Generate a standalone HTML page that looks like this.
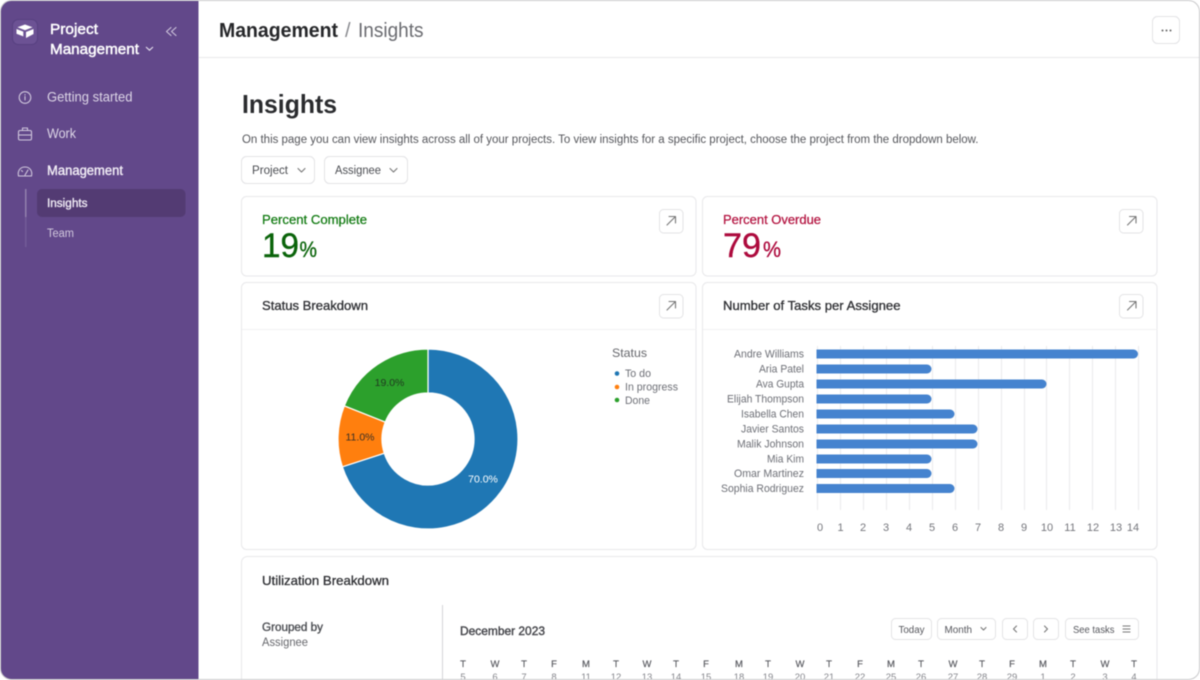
<!DOCTYPE html>
<html lang="en"><head><meta charset="utf-8"><title>Insights</title>
<style>
html,body{margin:0;padding:0;background:#fff;width:1200px;height:680px;overflow:hidden}
svg{display:block;filter:blur(.4px)}
text{font-family:"Liberation Sans",sans-serif;white-space:pre}
.s{fill:#fff;stroke:#e8e8ea;stroke-width:1}
.b{fill:#fff;stroke:#e3e3e5;stroke-width:1}
.g{fill:none;stroke:#777;stroke-width:1.1;stroke-linecap:round;stroke-linejoin:round}
.n{fill:none;stroke:#cfc6dc;stroke-width:1.1;stroke-linecap:round;stroke-linejoin:round}
.d{font-size:11px;fill:#6d6f76}
.c{font-size:9.5px;fill:#55565c;stroke:#55565c;stroke-width:.15px;text-anchor:middle}
.v{font-size:9.5px;fill:#85868c;text-anchor:middle}
.l{font-size:11.5px;fill:#4b4d52}
.t{font-size:12.5px;fill:#2f3034;stroke:#2f3034;stroke-width:.3px}
.a{font-size:11px;fill:#75767c;text-anchor:middle}
</style></head><body>
<svg width="1200" height="680" viewBox="0 0 1200 680" xmlns="http://www.w3.org/2000/svg">
<defs><clipPath id="w"><rect x="0.5" y="0.5" width="1199" height="679" rx="11"/></clipPath></defs>
<g clip-path="url(#w)">
<rect width="1200" height="680" fill="#fff"/>
<rect width="198.500" height="680" fill="#62488a"/>
<rect x="12.500" y="19.500" width="25" height="25" rx="6" fill="#6c5294" stroke="#574080"/>
<path d="M25 24.500l7.500 2.800-7.500 2.900-7.500-2.900z" fill="#fff"/>
<path d="M16.500 29l6.800 2.600v4.800l-6.800-2.700z" fill="#fff"/>
<path d="M33.500 29v5l-7.500 4v-6z" fill="#fff"/>
<text x="50" y="34" font-size="14.500" fill="#fff" stroke="#fff" stroke-width=".45" textLength="48" lengthAdjust="spacingAndGlyphs">Project</text>
<text x="50" y="54" font-size="14.500" fill="#fff" stroke="#fff" stroke-width=".45" textLength="89" lengthAdjust="spacingAndGlyphs">Management</text>
<path d="M146 47l3.500 3.200 3.500-3.200" fill="none" stroke="#e7e1ef" stroke-width="1.100"/>
<path d="M171 27.500l-4.500 4 4.500 4M176 27.500l-4.500 4 4.500 4" class="n"/>
<circle cx="25" cy="97.500" r="5.800" class="n"/><path d="M25 96.500v3.500M25 94.600v.3" class="n"/>
<rect x="18.500" y="130.500" width="13" height="9.500" rx="1.500" class="n"/><path d="M22.500 130.500v-2.500h5v2.500M18.500 135h13" class="n"/>
<path d="M18.500 176h13c1.200-5.500-2-9-6.500-9s-7.700 3.500-6.500 9zM25 175l3-5M21.500 170.500l1 1" class="n"/>
<text x="47" y="101.500" font-size="13.500" fill="#dcd5e6" textLength="85.500" lengthAdjust="spacingAndGlyphs">Getting started</text>
<text x="47" y="138" font-size="13.500" fill="#dcd5e6" textLength="29" lengthAdjust="spacingAndGlyphs">Work</text>
<text x="47" y="175" font-size="13.500" fill="#f3eff7" stroke="#f3eff7" stroke-width=".35" textLength="76" lengthAdjust="spacingAndGlyphs">Management</text>
<rect x="25" y="189" width="1.500" height="28" fill="#9280ad"/>
<rect x="25" y="217" width="1.500" height="30" fill="#735b98"/>
<rect x="37" y="189" width="148.500" height="28" rx="5" fill="#533b73"/>
<text x="47" y="207" font-size="11.500" fill="#f0ecf5" stroke="#f0ecf5" stroke-width=".35" textLength="40.500" lengthAdjust="spacingAndGlyphs">Insights</text>
<text x="47" y="237" font-size="11.500" fill="#d2c9de" textLength="27" lengthAdjust="spacingAndGlyphs">Team</text>

<rect x="199" y="57" width="1001" height="1" fill="#e8e8ea"/>
<text x="219" y="37" font-size="20" font-weight="700" fill="#26272a" textLength="119" lengthAdjust="spacingAndGlyphs">Management</text>
<text x="345" y="37" font-size="20" fill="#8a8b90">/</text>
<text x="358" y="37" font-size="20" fill="#6a6b70" textLength="65.500" lengthAdjust="spacingAndGlyphs">Insights</text>
<rect x="1152.500" y="16.500" width="27" height="27" rx="5" class="b"/>
<circle cx="1162.500" cy="30.500" r="1" fill="#666"/><circle cx="1166.500" cy="30.500" r="1" fill="#666"/><circle cx="1170.500" cy="30.500" r="1" fill="#666"/>

<text x="242" y="113" font-size="26" font-weight="700" fill="#2a2b2e" textLength="95" lengthAdjust="spacingAndGlyphs">Insights</text>
<text x="242" y="143" font-size="11.500" fill="#55565b" textLength="736.500" lengthAdjust="spacingAndGlyphs">On this page you can view insights across all of your projects. To view insights for a specific project, choose the project from the dropdown below.</text>

<rect x="241.500" y="156.500" width="73" height="27" rx="5" class="b"/>
<text x="252" y="174" class="l" textLength="36" lengthAdjust="spacingAndGlyphs">Project</text>
<path d="M298 168.500l3.500 3.500 3.500-3.500" class="g"/>
<rect x="324.500" y="156.500" width="83" height="27" rx="5" class="b"/>
<text x="335" y="174" class="l" textLength="46" lengthAdjust="spacingAndGlyphs">Assignee</text>
<path d="M390 168.500l3.500 3.500 3.500-3.500" class="g"/>

<rect x="241.500" y="196.500" width="454.500" height="79.500" rx="5" class="s"/>
<rect x="702.500" y="196.500" width="454.500" height="79.500" rx="5" class="s"/>
<text x="262" y="224" font-size="13" fill="#117a11" stroke="#117a11" stroke-width=".25" textLength="105" lengthAdjust="spacingAndGlyphs">Percent Complete</text>
<text x="262" y="257" font-size="34" fill="#0a640a" stroke="#0a640a" stroke-width=".4" textLength="37" lengthAdjust="spacingAndGlyphs">19</text>
<text x="299.500" y="257" font-size="22" fill="#0a640a" stroke="#0a640a" stroke-width=".3" textLength="17.500" lengthAdjust="spacingAndGlyphs">%</text>
<text x="723" y="224" font-size="13" fill="#b3123f" stroke="#b3123f" stroke-width=".25" textLength="98" lengthAdjust="spacingAndGlyphs">Percent Overdue</text>
<text x="723" y="257" font-size="34" fill="#ad0a3d" stroke="#ad0a3d" stroke-width=".4" textLength="38" lengthAdjust="spacingAndGlyphs">79</text>
<text x="763" y="257" font-size="22" fill="#ad0a3d" stroke="#ad0a3d" stroke-width=".3" textLength="18" lengthAdjust="spacingAndGlyphs">%</text>

<rect x="241.500" y="282.500" width="454.500" height="267" rx="5" class="s"/>
<rect x="702.500" y="282.500" width="454.500" height="267" rx="5" class="s"/>
<rect x="242" y="329" width="454" height="1" fill="#f2f2f3"/>
<rect x="703" y="329" width="454" height="1" fill="#f2f2f3"/>
<text x="262" y="310" class="t" textLength="106" lengthAdjust="spacingAndGlyphs">Status Breakdown</text>
<text x="723" y="310" class="t" textLength="177.500" lengthAdjust="spacingAndGlyphs">Number of Tasks per Assignee</text>

<rect x="659.500" y="209.500" width="23.500" height="23.500" rx="4" class="b"/>
<path d="M667 225l8-8M669 216.500h6.500v6.500" class="g"/>
<rect x="1119.500" y="209.500" width="23.500" height="23.500" rx="4" class="b"/>
<path d="M1127.500 225l8-8M1129.500 216.500h6.500v6.500" class="g"/>
<rect x="659.500" y="294.500" width="23.500" height="23.500" rx="4" class="b"/>
<path d="M667 310l8-8M669 301.500h6.500v6.500" class="g"/>
<rect x="1119.500" y="294.500" width="23.500" height="23.500" rx="4" class="b"/>
<path d="M1127.500 310l8-8M1129.500 301.500h6.500v6.500" class="g"/>

<g stroke="#fff" stroke-width="1.200">
<path d="M428 349A90 90 0 1 1 342.400 466.800L384.250 453.200A46 46 0 1 0 428 393Z" fill="#1f77b4"/>
<path d="M342.400 466.800A90 90 0 0 1 344.320 405.870L385.230 422.070A46 46 0 0 0 384.250 453.200Z" fill="#ff7f0e"/>
<path d="M344.320 405.870A90 90 0 0 1 428 349L428 393A46 46 0 0 0 385.230 422.070Z" fill="#2ca02c"/>
</g>
<text x="483" y="482.500" font-size="10.500" fill="#fff" text-anchor="middle">70.0%</text>
<text x="360" y="440.500" font-size="10.500" fill="#3a3026" text-anchor="middle">11.0%</text>
<text x="389.500" y="386" font-size="10.500" fill="#203a20" text-anchor="middle">19.0%</text>
<text x="612" y="357" font-size="12" fill="#66676c" textLength="35" lengthAdjust="spacingAndGlyphs">Status</text>
<circle cx="617" cy="373.500" r="2.300" fill="#1f77b4"/><circle cx="617" cy="387" r="2.300" fill="#ff7f0e"/><circle cx="617" cy="400" r="2.300" fill="#2ca02c"/>
<text x="625" y="377" class="d" textLength="26" lengthAdjust="spacingAndGlyphs">To do</text>
<text x="625" y="390.500" class="d" textLength="53" lengthAdjust="spacingAndGlyphs">In progress</text>
<text x="625" y="404" class="d" textLength="25" lengthAdjust="spacingAndGlyphs">Done</text>

<g fill="#ebebed">
<rect x="817" y="346" width="1" height="164"/><rect x="840" y="346" width="1" height="164"/><rect x="863" y="346" width="1" height="164"/><rect x="886" y="346" width="1" height="164"/><rect x="909" y="346" width="1" height="164"/><rect x="932" y="346" width="1" height="164"/><rect x="955" y="346" width="1" height="164"/><rect x="978" y="346" width="1" height="164"/><rect x="1001" y="346" width="1" height="164"/><rect x="1024" y="346" width="1" height="164"/><rect x="1046" y="346" width="1" height="164"/><rect x="1069" y="346" width="1" height="164"/><rect x="1092" y="346" width="1" height="164"/><rect x="1115" y="346" width="1" height="164"/><rect x="1138" y="346" width="1" height="164"/>
</g>
<g fill="#4583cf">
<path d="M816.500 349.500h317a4.500 4.500 0 0 1 0 9h-317z"/>
<path d="M816.500 364.500h110.500a4.500 4.500 0 0 1 0 9h-110.500z"/>
<path d="M816.500 379.500h225.500a4.500 4.500 0 0 1 0 9h-225.500z"/>
<path d="M816.500 394.500h110.500a4.500 4.500 0 0 1 0 9h-110.500z"/>
<path d="M816.500 409.500h133.500a4.500 4.500 0 0 1 0 9h-133.500z"/>
<path d="M816.500 424.500h156.500a4.500 4.500 0 0 1 0 9h-156.500z"/>
<path d="M816.500 439.500h156.500a4.500 4.500 0 0 1 0 9h-156.500z"/>
<path d="M816.500 454.500h110.500a4.500 4.500 0 0 1 0 9h-110.500z"/>
<path d="M816.500 469h110.500a4.500 4.500 0 0 1 0 9h-110.500z"/>
<path d="M816.500 484h133.500a4.500 4.500 0 0 1 0 9h-133.500z"/>
</g>
<text x="734" y="357.500" class="d" textLength="70" lengthAdjust="spacingAndGlyphs">Andre Williams</text>
<text x="759" y="372.500" class="d" textLength="45" lengthAdjust="spacingAndGlyphs">Aria Patel</text>
<text x="756" y="387.500" class="d" textLength="48" lengthAdjust="spacingAndGlyphs">Ava Gupta</text>
<text x="727" y="402.500" class="d" textLength="77" lengthAdjust="spacingAndGlyphs">Elijah Thompson</text>
<text x="741" y="417.500" class="d" textLength="63" lengthAdjust="spacingAndGlyphs">Isabella Chen</text>
<text x="741" y="432.500" class="d" textLength="63" lengthAdjust="spacingAndGlyphs">Javier Santos</text>
<text x="737" y="447.500" class="d" textLength="67" lengthAdjust="spacingAndGlyphs">Malik Johnson</text>
<text x="767" y="462.500" class="d" textLength="37" lengthAdjust="spacingAndGlyphs">Mia Kim</text>
<text x="734" y="477" class="d" textLength="70" lengthAdjust="spacingAndGlyphs">Omar Martinez</text>
<text x="721" y="492" class="d" textLength="83" lengthAdjust="spacingAndGlyphs">Sophia Rodriguez</text>
<text x="820" y="531" class="a">0</text><text x="840.500" y="531" class="a">1</text><text x="863" y="531" class="a">2</text><text x="886" y="531" class="a">3</text><text x="909" y="531" class="a">4</text><text x="932" y="531" class="a">5</text><text x="955" y="531" class="a">6</text><text x="978" y="531" class="a">7</text><text x="1001" y="531" class="a">8</text><text x="1024" y="531" class="a">9</text><text x="1047" y="531" class="a">10</text><text x="1070" y="531" class="a">11</text><text x="1093" y="531" class="a">12</text><text x="1116" y="531" class="a">13</text><text x="1133" y="531" class="a">14</text>

<rect x="241.500" y="556.500" width="915.500" height="140" rx="6" class="s"/>
<text x="262" y="585" class="t" textLength="127" lengthAdjust="spacingAndGlyphs">Utilization Breakdown</text>
<text x="262" y="631" font-size="11.500" fill="#4b4d52" stroke="#4b4d52" stroke-width=".35" textLength="61" lengthAdjust="spacingAndGlyphs">Grouped by</text>
<text x="262" y="646" font-size="11.500" fill="#66676c" textLength="46" lengthAdjust="spacingAndGlyphs">Assignee</text>
<rect x="442" y="605" width="1" height="75" fill="#d5d5d8"/>
<text x="460" y="635" font-size="12" fill="#44454a" stroke="#44454a" stroke-width=".4" textLength="85" lengthAdjust="spacingAndGlyphs">December 2023</text>
<rect x="891.500" y="618.500" width="40" height="21" rx="4" class="b"/>
<text x="898.500" y="633" font-size="10" fill="#55565c" textLength="26" lengthAdjust="spacingAndGlyphs">Today</text>
<rect x="937.500" y="618.500" width="58" height="21" rx="4" class="b"/>
<text x="944.500" y="633" font-size="10" fill="#55565c" textLength="27.500" lengthAdjust="spacingAndGlyphs">Month</text>
<path d="M981 627.500l2.500 2.500 2.500-2.500" class="g"/>
<rect x="1002.500" y="618.500" width="25" height="21" rx="4" class="b"/>
<path d="M1016.500 626l-3 3 3 3" class="g"/>
<rect x="1033.500" y="618.500" width="25" height="21" rx="4" class="b"/>
<path d="M1044.500 626l3 3-3 3" class="g"/>
<rect x="1065.500" y="618.500" width="73" height="21" rx="4" class="b"/>
<text x="1073" y="633" font-size="10" fill="#55565c" textLength="41.500" lengthAdjust="spacingAndGlyphs">See tasks</text>
<path d="M1123 626h7M1123 629h7M1123 632h7" class="g"/>

<text x="463" y="667" class="c">T</text><text x="495" y="667" class="c">W</text><text x="524" y="667" class="c">T</text><text x="554" y="667" class="c">F</text><text x="586" y="667" class="c">M</text><text x="616" y="667" class="c">T</text><text x="647" y="667" class="c">W</text><text x="676" y="667" class="c">T</text><text x="706" y="667" class="c">F</text><text x="739" y="667" class="c">M</text><text x="768" y="667" class="c">T</text><text x="800" y="667" class="c">W</text><text x="829" y="667" class="c">T</text><text x="860" y="667" class="c">F</text><text x="891" y="667" class="c">M</text><text x="921" y="667" class="c">T</text><text x="953" y="667" class="c">W</text><text x="982" y="667" class="c">T</text><text x="1012" y="667" class="c">F</text><text x="1043" y="667" class="c">M</text><text x="1073" y="667" class="c">T</text><text x="1105" y="667" class="c">W</text><text x="1134" y="667" class="c">T</text>
<text x="463" y="680" class="v">5</text><text x="495" y="680" class="v">6</text><text x="524" y="680" class="v">7</text><text x="554" y="680" class="v">8</text><text x="586" y="680" class="v">11</text><text x="616" y="680" class="v">12</text><text x="647" y="680" class="v">13</text><text x="676" y="680" class="v">14</text><text x="706" y="680" class="v">15</text><text x="739" y="680" class="v">18</text><text x="768" y="680" class="v">19</text><text x="800" y="680" class="v">20</text><text x="829" y="680" class="v">21</text><text x="860" y="680" class="v">22</text><text x="891" y="680" class="v">25</text><text x="921" y="680" class="v">26</text><text x="953" y="680" class="v">27</text><text x="982" y="680" class="v">28</text><text x="1012" y="680" class="v">29</text><text x="1043" y="680" class="v">1</text><text x="1073" y="680" class="v">2</text><text x="1105" y="680" class="v">3</text><text x="1134" y="680" class="v">4</text>
</g>
<rect x="0.500" y="0.500" width="1199" height="679" rx="11" fill="none" stroke="#c9c9cb"/>
</svg>
</body></html>
